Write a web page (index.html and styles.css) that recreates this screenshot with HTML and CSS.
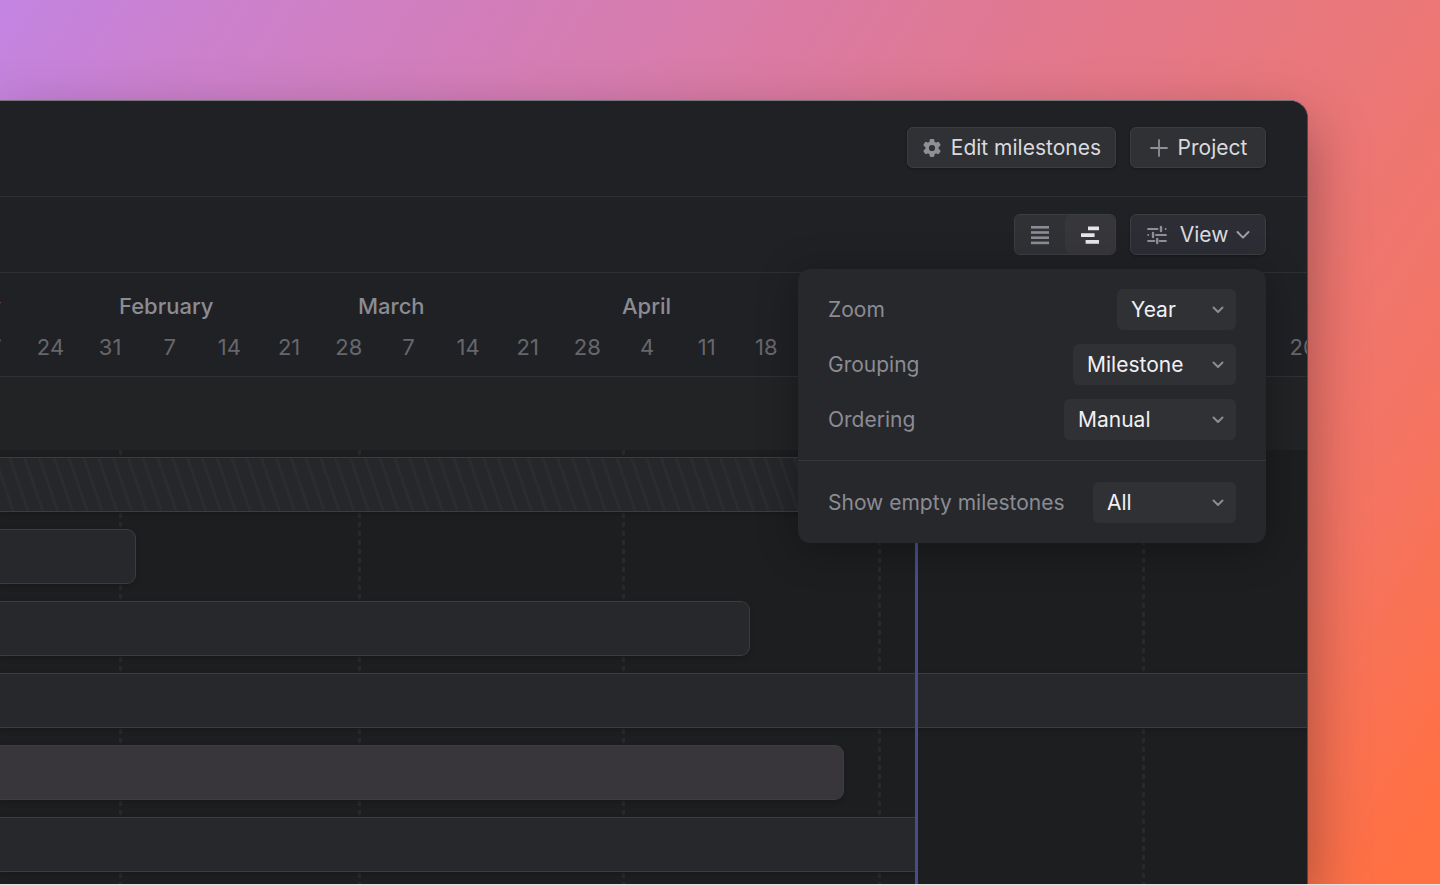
FILE: index.html
```html
<!DOCTYPE html>
<html lang="en">
<head>
  <meta charset="UTF-8">
  <meta name="viewport" content="width=device-width, initial-scale=1.0">
  <title>Roadmap</title>
  <link rel="stylesheet" href="styles.css">
</head>
<body>
  <div class="stage">
    <main class="window">
      <header class="topbar">
        <button type="button" class="btn btn-edit">
          <svg width="20" height="20" viewBox="0 0 20 20" fill="none">
            <g fill="#8f9097">
              <rect x="7.6" y="1" width="4.8" height="18" rx="1.4"/>
              <rect x="7.6" y="1" width="4.8" height="18" rx="1.4" transform="rotate(60 10 10)"/>
              <rect x="7.6" y="1" width="4.8" height="18" rx="1.4" transform="rotate(120 10 10)"/>
            </g>
            <circle cx="10" cy="10" r="4.9" stroke="#8f9097" stroke-width="3.6"/>
            <circle cx="10" cy="10" r="3.1" fill="#303135"/>
          </svg>
          Edit milestones
        </button>
        <button type="button" class="btn btn-wide">
          <svg width="20" height="20" viewBox="0 0 20 20" fill="none" stroke="#8f9097" stroke-width="1.8" stroke-linecap="round">
            <path d="M10 2V18M2 10H18"/>
          </svg>
          Project
        </button>
      </header>

      <div class="toolbar">
        <div class="switch">
          <button type="button" aria-label="List" aria-pressed="false">
            <svg width="20" height="20" viewBox="0 0 20 20" fill="#8c8d94">
              <rect x="1" y="1" width="18" height="2.6"/>
              <rect x="1" y="6.2" width="18" height="2.6"/>
              <rect x="1" y="11.4" width="18" height="2.6"/>
              <rect x="1" y="16.6" width="18" height="2.6"/>
            </svg>
          </button>
          <button type="button" class="active" aria-label="Timeline" aria-pressed="true">
            <svg width="20" height="20" viewBox="0 0 20 20" fill="#e6e6ea">
              <rect x="8" y="1.4" width="11" height="3.8" rx=".4"/>
              <rect x="1" y="8.2" width="13.6" height="3.8" rx=".4"/>
              <rect x="5.6" y="15" width="13.4" height="3.8" rx=".4"/>
            </svg>
          </button>
        </div>

        <div class="view-menu">
          <button type="button" class="btn btn-wide btn-view" aria-expanded="true">
            <svg width="22" height="20" viewBox="0 0 22 20" fill="none" stroke="#8f9097" stroke-width="1.8" stroke-linecap="round">
              <path d="M2 4H11.5M19.6 4H19.7M2.2 10H2.3M10 10H20M2 16H8.5M13.5 16H20"/>
              <path d="M15 2V6M7 8V12M11.2 14V18" stroke-width="2.4"/>
            </svg>
            View
            <svg class="caret" width="14" height="10" viewBox="0 0 14 10" fill="none" stroke="#a0a1a8" stroke-width="2" stroke-linecap="round" stroke-linejoin="round">
              <path d="M1.5 2L7 7.6L12.5 2"/>
            </svg>
          </button>

          <div class="popover">
            <div class="options">
              <div class="option">
                <label for="zoom">Zoom</label>
                <span class="select select-zoom">
                  <select id="zoom"><option>Year</option><option>Quarter</option></select>
                  <svg width="12" height="8" viewBox="0 0 12 8"><path d="M1.5 1.5L6 6L10.5 1.5"/></svg>
                </span>
              </div>
              <div class="option">
                <label for="grouping">Grouping</label>
                <span class="select select-grouping">
                  <select id="grouping"><option>Milestone</option><option>None</option></select>
                  <svg width="12" height="8" viewBox="0 0 12 8"><path d="M1.5 1.5L6 6L10.5 1.5"/></svg>
                </span>
              </div>
              <div class="option">
                <label for="ordering">Ordering</label>
                <span class="select select-ordering">
                  <select id="ordering"><option>Manual</option><option>Name</option></select>
                  <svg width="12" height="8" viewBox="0 0 12 8"><path d="M1.5 1.5L6 6L10.5 1.5"/></svg>
                </span>
              </div>
            </div>
            <div class="options">
              <div class="option">
                <label for="empty">Show empty milestones</label>
                <span class="select select-empty">
                  <select id="empty"><option>All</option><option>None</option></select>
                  <svg width="12" height="8" viewBox="0 0 12 8"><path d="M1.5 1.5L6 6L10.5 1.5"/></svg>
                </span>
              </div>
            </div>
          </div>
        </div>
      </div>

      <div class="dates">
        <div class="months strip">
          <span class="past">January</span><span>February</span><span>March</span><span>April</span>
        </div>
        <div class="weeks strip">
          <span>17</span><span>24</span><span>31</span>
          <span>7</span><span>14</span><span>21</span><span>28</span>
          <span>7</span><span>14</span><span>21</span><span>28</span>
          <span>4</span><span>11</span><span>18</span>
          <span class="last">20</span>
        </div>
      </div>

      <div class="group-row"></div>

      <div class="chart">
        <div class="gridlines strip"><i></i><i></i><i></i><i></i><i></i><i></i></div>
        <div class="bars">
          <div class="bar hatched" style="width: 75%"></div>
          <div class="bar" style="width: 10.4%"></div>
          <div class="bar" style="width: 57.35%"></div>
          <div class="bar open" style="width: 100%"></div>
          <div class="bar done" style="width: 64.55%"></div>
          <div class="bar open" style="width: 70%"></div>
        </div>
        <div class="today" style="left: 70%"></div>
      </div>
    </main>
  </div>
</body>
</html>
```
FILE: styles.css
```css
:root {
  --panel: #202125;
  --chart: #1d1e20;
  --line: #2f3034;
  --bar: #27282c;
  --bar-border: #3b3c40;
  --control: #303135;
  --text: #dadade;
  --text-dim: #8b8c93;
  --text-faint: #66676c;
}

* {
  box-sizing: border-box;
}

html {
  background: #e6e2e4;
}

body {
  margin: 0;
  font-family: Inter, "Liberation Sans", sans-serif;
  font-size: 21px;
  line-height: 28px;
  color: var(--text);
}

.stage {
  display: flex;
  min-height: calc(100vh - 1px);
  padding: 100px 132px 0 0;
  overflow: hidden;
  background: linear-gradient(122deg, #c384e2 0%, #cc80cb 12%, #d77cae 34%, #e1788f 53%, #eb7777 71%, #f47463 84%, #ff7043 97%);
}

.window {
  position: relative;
  display: flex;
  flex: 1;
  flex-direction: column;
  min-width: 0;
  background: var(--chart);
  border-top: 1px solid #77757a;
  border-right: 1px solid #5a4448;
  border-top-right-radius: 18px;
  box-shadow: 0 24px 60px rgba(0, 0, 0, 0.35);
}

/* top bars */

.topbar,
.toolbar {
  display: flex;
  justify-content: flex-end;
  gap: 14px;
  background: var(--panel);
  border-bottom: 1px solid var(--line);
}

.topbar {
  padding: 26px 41px 28px;
  border-top-right-radius: 17px;
}

.toolbar {
  padding: 17px 41px;
}

button,
select {
  font: inherit;
  color: inherit;
  cursor: pointer;
}

.btn {
  display: flex;
  align-items: center;
  justify-content: center;
  gap: 9px;
  height: 41px;
  padding: 0 14px;
  background: var(--control);
  border: 1px solid #3c3d41;
  border-radius: 6px;
  box-shadow: 0 1px 3px rgba(0, 0, 0, 0.3);
}

.btn-wide {
  width: 136px;
}

.btn-view {
  gap: 12px;
  background: #2d2d35;
}

.btn-view .caret {
  margin-left: -4px;
}

.switch {
  display: flex;
  width: 102px;
  height: 41px;
  background: var(--control);
  border: 1px solid #3c3d41;
  border-radius: 6px;
  overflow: hidden;
}

.switch button {
  display: flex;
  flex: 1;
  align-items: center;
  justify-content: center;
  padding: 0;
  background: none;
  border: 0;
}

.switch .active {
  background: #37363b;
  border-radius: 6px;
}

/* view options */

.view-menu {
  position: relative;
}

.popover {
  position: absolute;
  top: 55px;
  right: 0;
  z-index: 2;
  width: 468px;
  background: #27282c;
  border-radius: 12px;
  box-shadow: 0 6px 40px rgba(0, 0, 0, 0.3);
}

.options {
  display: flex;
  flex-direction: column;
  gap: 14px;
  padding: 20px 30px;
}

.options + .options {
  padding-top: 21px;
  border-top: 1px solid #35363a;
}

.option {
  display: flex;
  align-items: center;
  justify-content: space-between;
  color: var(--text-dim);
}

.select {
  position: relative;
}

.select select {
  display: block;
  width: 100%;
  height: 41px;
  padding: 0 14px;
  color: #f0f0f3;
  background: var(--control);
  border: 0;
  border-radius: 6px;
  appearance: none;
}

.select svg {
  position: absolute;
  top: 17px;
  right: 12px;
  fill: none;
  stroke: #8b8c93;
  stroke-width: 2;
  stroke-linecap: round;
  stroke-linejoin: round;
  pointer-events: none;
}

.select-zoom { width: 119px; }
.select-grouping { width: 163px; }
.select-ordering { width: 172px; }
.select-empty { width: 143px; }

/* timeline */

.strip {
  display: grid;
  margin: 0 -26px 0 -39px;
}

.months,
.gridlines {
  grid-template-columns: 158fr 239fr 264fr 256fr 264fr 191fr;
}

.dates {
  display: flex;
  flex-direction: column;
  gap: 13px;
  padding: 19px 0 15px;
  overflow: hidden;
  font-size: 22px;
  background: var(--panel);
  border-bottom: 1px solid var(--line);
}

.months {
  font-weight: 500;
  color: var(--text-dim);
}

.months .past {
  display: flex;
  justify-content: flex-end;
  width: 40px;
}

.weeks {
  grid-template-columns: repeat(23, minmax(0, 1fr));
  color: var(--text-faint);
  text-align: center;
}

.weeks .last {
  grid-column: 23;
}

.group-row {
  height: 73px;
  background: #222325;
}

.chart {
  position: relative;
  flex: 1;
  padding: 7px 0;
  overflow: hidden;
}

.gridlines {
  position: absolute;
  inset: 0;
}

.gridlines i {
  background: repeating-linear-gradient(#28292b 0 5px, transparent 5px 9px) left / 3px 100% no-repeat;
}

.bars {
  position: relative;
  display: flex;
  flex-direction: column;
  gap: 17px;
}

.bar {
  height: 55px;
  background: var(--bar);
  border: 1px solid var(--bar-border);
  border-left: 0;
  border-radius: 0 9px 9px 0;
  box-shadow: 0 2px 5px rgba(0, 0, 0, 0.2);
}

.bar.open {
  border-right: 0;
  border-radius: 0;
}

.bar.done {
  background: #38363b;
  border-color: #3e3e42;
}

.bar.hatched {
  background: repeating-linear-gradient(71deg, #26272b 0 11px, #2b2c2e 11px 14px);
}

.today {
  position: absolute;
  top: 0;
  bottom: 0;
  width: 3px;
  background: #494b8f;
}
```
